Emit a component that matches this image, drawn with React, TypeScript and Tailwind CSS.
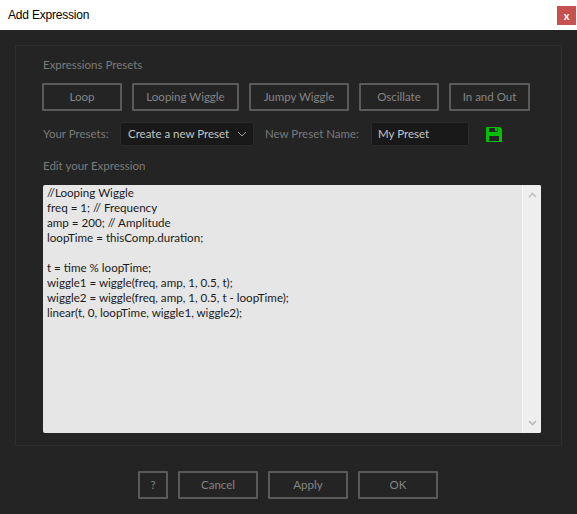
import React from "react";

const font = { sans: "font-['Lato','Liberation_Sans',sans-serif]" };

const presets = [
  { label: "Loop", width: "w-[80px]" },
  { label: "Looping Wiggle", width: "w-[107px]" },
  { label: "Jumpy Wiggle", width: "w-[100px]" },
  { label: "Oscillate", width: "w-[80px]" },
  { label: "In and Out", width: "w-[81px]" },
];

const code = `//Looping Wiggle
freq = 1; // Frequency
amp = 200; // Amplitude
loopTime = thisComp.duration;

t = time % loopTime;
wiggle1 = wiggle(freq, amp, 1, 0.5, t);
wiggle2 = wiggle(freq, amp, 1, 0.5, t - loopTime);
linear(t, 0, loopTime, wiggle1, wiggle2);`;

function DialogButton({ label, width }: { label: string; width: string }) {
  return (
    <button
      className={`${width} h-[28px] shrink-0 rounded-[1px] border-2 border-[#5a5a5a] bg-[#242424] text-[11.5px] text-[#858585]`}
    >
      {label}
    </button>
  );
}

function SaveIcon() {
  return (
    <svg width="16" height="15" viewBox="0 0 16 15" className="ml-[17px] shrink-0">
      <path
        fillRule="evenodd"
        fill="#00c000"
        d="M0 0h14l2 2v13H0V0zM3 1v4h9V1H3zM3 9v5h10V9H3z"
      />
      <path fill="#00c000" d="M9 1h2v3H9z" />
    </svg>
  );
}

export default function App() {
  return (
    <div className={`${font.sans} flex h-[514px] w-[577px] flex-col overflow-hidden bg-[#242424]`}>
      <div className="flex h-[30px] shrink-0 items-center justify-between bg-white pl-2 pr-[1px]">
        <span className="text-[12px] tracking-[-0.2px] text-black font-['Liberation_Sans',sans-serif]">Add Expression</span>
        <div className="flex h-[19px] w-[19px] items-center justify-center bg-[#c75050] text-[11px] font-bold leading-none text-white">
          x
        </div>
      </div>

      <div className="mx-[15px] mt-[15px] h-[401px] w-[547px] shrink-0 rounded-[1px] border border-[#2f2f2f] pl-[27px]">
        <div className="mt-[11px] text-[11.5px] leading-[15px] text-[#7a7a7a]">Expressions Presets</div>

        <div className="-ml-px mt-[11px] flex gap-[10px]">
          {presets.map((preset) => (
            <DialogButton key={preset.label} label={preset.label} width={preset.width} />
          ))}
        </div>

        <div className="mt-[11px] flex h-[24px] items-center text-[11.5px] text-[#7a7a7a]">
          <span className="w-[77px] shrink-0">Your Presets:</span>
          <div className="flex h-[24px] w-[134px] shrink-0 items-center justify-between rounded-[2px] border border-[#2a2a2a] bg-[#191919] pl-[7px] pr-[6px] text-[#c4c4c4]">
            <span>Create a new Preset</span>
            <svg width="10" height="6" viewBox="0 0 10 6" fill="none" stroke="#9a9a9a" strokeWidth="1">
              <path d="M1 1l4 4 4-4" />
            </svg>
          </div>
          <span className="ml-[11px] w-[106px] shrink-0">New Preset Name:</span>
          <div className="flex h-[24px] w-[98px] shrink-0 items-center rounded-[2px] border border-[#2a2a2a] bg-[#191919] pl-[6px] text-[#c4c4c4]">
            My Preset
          </div>
          <SaveIcon />
        </div>

        <div className="mt-[12px] text-[11.5px] leading-[15px] text-[#7a7a7a]">Edit your Expression</div>

        <div className="mt-[12px] flex h-[248px] w-[498px] overflow-hidden rounded-[2px] bg-[#e6e6e6]">
          <pre className={`${font.sans} flex-1 whitespace-pre-wrap pl-[4px] text-[11.6px] leading-[15px] text-[#1a1a1a]`}>
            {code}
          </pre>
          <div className="flex w-[19px] shrink-0 flex-col items-center justify-between border-l border-[#f8f8f8] bg-[#eeeeee] py-[7px]">
            <svg width="9" height="6" viewBox="0 0 9 6" fill="none" stroke="#c2c2c2" strokeWidth="1.6">
              <path d="M1 5l3.5-3.5L8 5" />
            </svg>
            <svg width="9" height="6" viewBox="0 0 9 6" fill="none" stroke="#b8b8b8" strokeWidth="1.6">
              <path d="M1 1l3.5 3.5L8 1" />
            </svg>
          </div>
        </div>
      </div>

      <div className="ml-[138px] mt-[25px] flex gap-[10px]">
        <DialogButton label="?" width="w-[30px]" />
        <DialogButton label="Cancel" width="w-[80px]" />
        <DialogButton label="Apply" width="w-[80px]" />
        <DialogButton label="OK" width="w-[80px]" />
      </div>
    </div>
  );
}
